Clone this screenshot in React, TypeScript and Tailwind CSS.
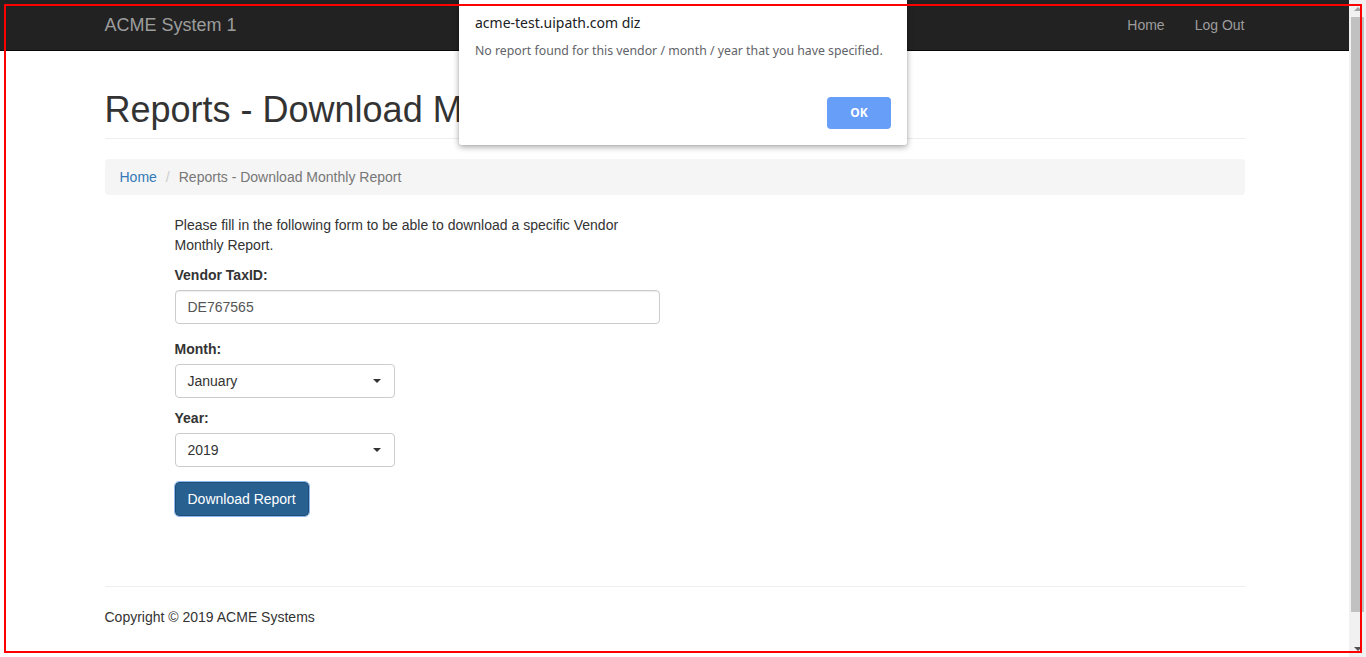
import React from "react";

function Caret() {
  return (
    <svg width="8" height="4" viewBox="0 0 8 4" className="block">
      <path d="M0 0 L8 0 L4 4 Z" fill="#333" />
    </svg>
  );
}

function Scrollbar() {
  return (
    <div className="w-[17px] h-full bg-[#f1f1f1] flex flex-col items-center shrink-0">
      <div className="h-[17px] w-full flex items-center justify-center">
        <svg width="8" height="4" viewBox="0 0 8 4">
          <path d="M0 4 L8 4 L4 0 Z" fill="#a3a3a3" />
        </svg>
      </div>
      <div className="w-[13px] h-[595px] bg-[#c1c1c1]" />
      <div className="flex-1" />
      <div className="h-[17px] w-full flex items-center justify-center">
        <svg width="8" height="4" viewBox="0 0 8 4">
          <path d="M0 0 L8 0 L4 4 Z" fill="#505050" />
        </svg>
      </div>
    </div>
  );
}

export default function App() {
  return (
    <div
      className="relative w-[1366px] h-[657px] overflow-hidden flex bg-white text-[14px] text-[#333]"
      style={{ fontFamily: '"Liberation Sans", Arial, sans-serif' }}
    >
      <div className="w-[1349px] h-full flex flex-col">
        {/* Navbar */}
        <div className="h-[51px] bg-[#222] border-b border-[#080808] shrink-0">
          <div className="w-[1170px] mx-auto px-[15px] h-full flex items-center justify-between">
            <div className="text-[18px] text-[#9d9d9d] leading-[20px]">ACME System 1</div>
            <div className="flex -mr-[15px] text-[#9d9d9d] leading-[20px]">
              <div className="px-[15px]">Home</div>
              <div className="px-[15px]">Log Out</div>
            </div>
          </div>
        </div>

        {/* Main */}
        <div className="w-[1170px] mx-auto px-[15px] flex flex-col">
          <div className="mt-[39px] pb-[8px] border-b border-[#eee]">
            <h1 className="text-[36px] leading-[1.1] font-normal text-[#333]">
              Reports - Download Monthly Report
            </h1>
          </div>

          <div className="mt-[20px] bg-[#f5f5f5] rounded-[4px] px-[15px] py-[8px] leading-[20px] flex items-center">
            <span className="text-[#337ab7]">Home</span>
            <span className="text-[#ccc] ml-[9px] mr-[9px]">/</span>
            <span className="text-[#777]">Reports - Download Monthly Report</span>
          </div>

          <div className="mt-[20px] ml-[70px] w-[485px] flex flex-col leading-[20px]">
            <p className="mb-[10px]">
              Please fill in the following form to be able to download a specific Vendor Monthly Report.
            </p>
            <label className="font-bold mb-[5px]">Vendor TaxID:</label>
            <div className="h-[34px] border border-[#ccc] rounded-[4px] px-[12px] flex items-center text-[#555] shadow-[inset_0_1px_1px_rgba(0,0,0,0.075)]">
              DE767565
            </div>

            <label className="font-bold mt-[15px] mb-[5px]">Month:</label>
            <div className="w-[220px] h-[34px] border border-[#ccc] rounded-[4px] pl-[12px] pr-[13px] flex items-center justify-between text-[#333]">
              <span>January</span>
              <Caret />
            </div>

            <label className="font-bold mt-[10px] mb-[5px]">Year:</label>
            <div className="w-[220px] h-[34px] border border-[#ccc] rounded-[4px] pl-[12px] pr-[13px] flex items-center justify-between text-[#333]">
              <span>2019</span>
              <Caret />
            </div>

            <div className="mt-[15px]">
              <div className="inline-flex h-[34px] items-center px-[12px] bg-[#286090] border border-[#204d74] rounded-[4px] text-white outline outline-1 outline-[#8db8f0]">
                Download Report
              </div>
            </div>
          </div>

          <div className="mt-[70px] border-t border-[#eee]" />
          <div className="mt-[20px] leading-[20px]">Copyright © 2019 ACME Systems</div>
        </div>
      </div>

      <Scrollbar />

      {/* Alert dialog */}
      <div
        className="absolute left-[459px] top-0 w-[448px] h-[145px] bg-white rounded-b-[2px] shadow-[0_2px_6px_rgba(0,0,0,0.35),0_0_1px_rgba(0,0,0,0.3)]"
        style={{ fontFamily: '"Noto Sans", "Open Sans", sans-serif' }}
      >
        <div className="pl-[16px] pt-[12px] text-[14px] leading-[22px] text-[#202124]">
          acme-test.uipath.com diz
        </div>
        <div className="pl-[16px] pt-[8px] text-[12.3px] leading-[18px] text-[#5f6368]">
          No report found for this vendor / month / year that you have specified.
        </div>
        <div className="absolute left-[368px] top-[97px] w-[64px] h-[32px] rounded-[4px] bg-[#679ef7] text-white text-[12px] font-bold flex items-center justify-center">
          OK
        </div>
      </div>

      {/* Red outline overlay */}
      <div className="absolute left-[4px] top-[4px] w-[1358px] h-[649px] border-2 border-[#ff0000] pointer-events-none" />
    </div>
  );
}
